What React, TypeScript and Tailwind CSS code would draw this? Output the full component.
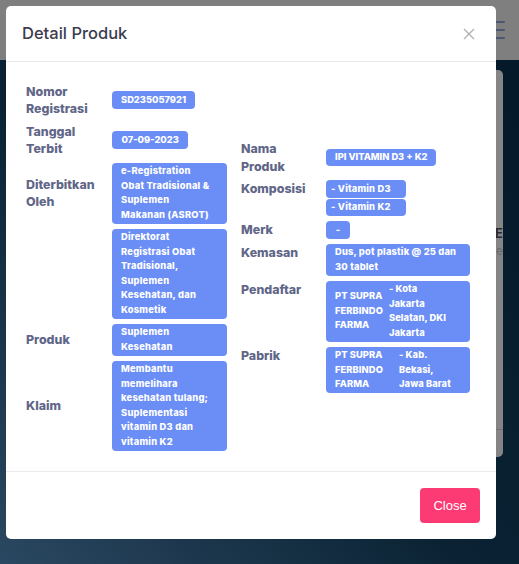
import React from "react";

const B = ({ lines, className = "" }: { lines: string[]; className?: string }) => (
  <div
    className={
      "bg-[#6b8ef6] text-white font-extrabold text-[9.3px] leading-[14.5px] py-[1.5px] rounded-[4px] " +
      className
    }
  >
    {lines.map((l, i) => (
      <div key={i} className="whitespace-nowrap">
        {l}
      </div>
    ))}
  </div>
);

const L = ({ lines }: { lines: string[] }) => (
  <div className="font-extrabold text-[12.4px] leading-[17.5px] text-[#5f6688]">
    {lines.map((l, i) => (
      <div key={i} className="whitespace-nowrap">
        {l}
      </div>
    ))}
  </div>
);

export default function App() {
  return (
    <div className="relative w-[519px] h-[564px] overflow-hidden font-['Inter',sans-serif]">
      {/* page behind overlay */}
      <div className="flex flex-col h-full">
        <div className="h-[60px] bg-[#7f7f7f] flex items-center justify-end pr-[14px]">
          <div className="flex flex-col gap-[5.5px] w-[18px]">
            <div className="h-[2.5px] bg-[#4f5577] rounded" />
            <div className="h-[2.5px] bg-[#4f5577] rounded" />
            <div className="h-[2.5px] bg-[#4f5577] rounded" />
          </div>
        </div>
        <div className="flex-1 bg-[linear-gradient(to_top_right,#2b4862_0%,#0a2233_45%,#04192a_100%)] pt-[10px] pr-[16px] pl-[20px]">
          <div className="h-[387px] bg-[#858585] rounded-[5px] overflow-hidden flex flex-col">
            <div className="mt-[155px] text-right font-bold text-[13px] leading-[17px] text-[#2b2b2b]">
              RE
            </div>
            <div className="text-right text-[12px] leading-[17px] text-[#6b6b6b]">Se</div>
            <div className="mt-[170px] border-t border-[#707070]" />
          </div>
        </div>
      </div>

      {/* modal */}
      <div className="absolute left-[6px] top-[6px] w-[490px] bg-white rounded-[5px] flex flex-col">
        <div className="h-[56px] border-b border-[#e9ecef] flex items-center justify-between pl-[16px] pr-[21px]">
          <div className="text-[16.5px] font-medium text-[#3c3c4e]">Detail Produk</div>
          <svg width="12" height="12" viewBox="0 0 12 12" className="mt-[1px]">
            <path d="M1 1 L11 11 M11 1 L1 11" stroke="#b0b0b0" strokeWidth="1.3" fill="none" />
          </svg>
        </div>

        <div className="h-[409px] pl-[20px] pr-[26px] flex items-center gap-[14px]">
          {/* left column */}
          <div className="grid grid-cols-[86px_115px] gap-y-[5px] items-center">
            <L lines={["Nomor", "Registrasi"]} />
            <div className="flex">
              <B lines={["SD235057921"]} className="px-[9px]" />
            </div>
            <L lines={["Tanggal", "Terbit"]} />
            <div className="flex">
              <B lines={["07-09-2023"]} className="px-[9.5px]" />
            </div>
            <L lines={["Diterbitkan", "Oleh"]} />
            <B
              lines={["e-Registration", "Obat Tradisional &", "Suplemen", "Makanan (ASROT)"]}
              className="px-[9px] tracking-[0.25px]"
            />
            <div />
            <B
              lines={[
                "Direktorat",
                "Registrasi Obat",
                "Tradisional,",
                "Suplemen",
                "Kesehatan, dan",
                "Kosmetik",
              ]}
              className="px-[9px] tracking-[0.25px]"
            />
            <L lines={["Produk"]} />
            <B lines={["Suplemen", "Kesehatan"]} className="px-[9px] tracking-[0.25px]" />
            <L lines={["Klaim"]} />
            <B
              lines={[
                "Membantu",
                "memelihara",
                "kesehatan tulang;",
                "Suplementasi",
                "vitamin D3 dan",
                "vitamin K2",
              ]}
              className="px-[9px] tracking-[0.25px]"
            />
          </div>

          {/* right column */}
          <div className="grid grid-cols-[85px_144px] gap-y-[5px] items-start">
            <L lines={["Nama", "Produk"]} />
            <div className="flex self-center">
              <B lines={["IPI VITAMIN D3 + K2"]} className="px-[9px]" />
            </div>
            <L lines={["Komposisi"]} />
            <div className="flex flex-col gap-[1px] w-[80px]">
              <B lines={["- Vitamin D3"]} className="pl-[5px] tracking-[0.2px]" />
              <B lines={["- Vitamin K2"]} className="pl-[5px] tracking-[0.2px]" />
            </div>
            <L lines={["Merk"]} />
            <div className="flex">
              <B lines={["-"]} className="w-[24px] text-center" />
            </div>
            <L lines={["Kemasan"]} />
            <B lines={["Dus, pot plastik @ 25 dan", "30 tablet"]} className="px-[9px] tracking-[0.2px]" />
            <L lines={["Pendaftar"]} />
            <div className="bg-[#6b8ef6] text-white font-extrabold text-[9.3px] leading-[14.5px] py-[1.5px] rounded-[4px] pl-[9px] flex items-center gap-[6px] tracking-[0.1px]">
              <div>
                <div className="whitespace-nowrap">PT SUPRA</div>
                <div className="whitespace-nowrap">FERBINDO</div>
                <div className="whitespace-nowrap">FARMA</div>
              </div>
              <div>
                <div className="whitespace-nowrap">- Kota</div>
                <div className="whitespace-nowrap">Jakarta</div>
                <div className="whitespace-nowrap">Selatan, DKI</div>
                <div className="whitespace-nowrap">Jakarta</div>
              </div>
            </div>
            <L lines={["Pabrik"]} />
            <div className="bg-[#6b8ef6] text-white font-extrabold text-[9.3px] leading-[14.5px] py-[1.5px] rounded-[4px] pl-[9px] flex items-center tracking-[0.1px]">
              <div className="w-[64px]">
                <div className="whitespace-nowrap">PT SUPRA</div>
                <div className="whitespace-nowrap">FERBINDO</div>
                <div className="whitespace-nowrap">FARMA</div>
              </div>
              <div>
                <div className="whitespace-nowrap">- Kab.</div>
                <div className="whitespace-nowrap">Bekasi,</div>
                <div className="whitespace-nowrap">Jawa Barat</div>
              </div>
            </div>
          </div>
        </div>

        <div className="border-t border-[#e9ecef] p-[16px] flex justify-end">
          <button className="w-[60px] h-[35px] rounded-[4px] bg-[#fc3a73] text-white text-[13px] font-['Liberation_Sans',Arial,sans-serif]">
            Close
          </button>
        </div>
      </div>
    </div>
  );
}
